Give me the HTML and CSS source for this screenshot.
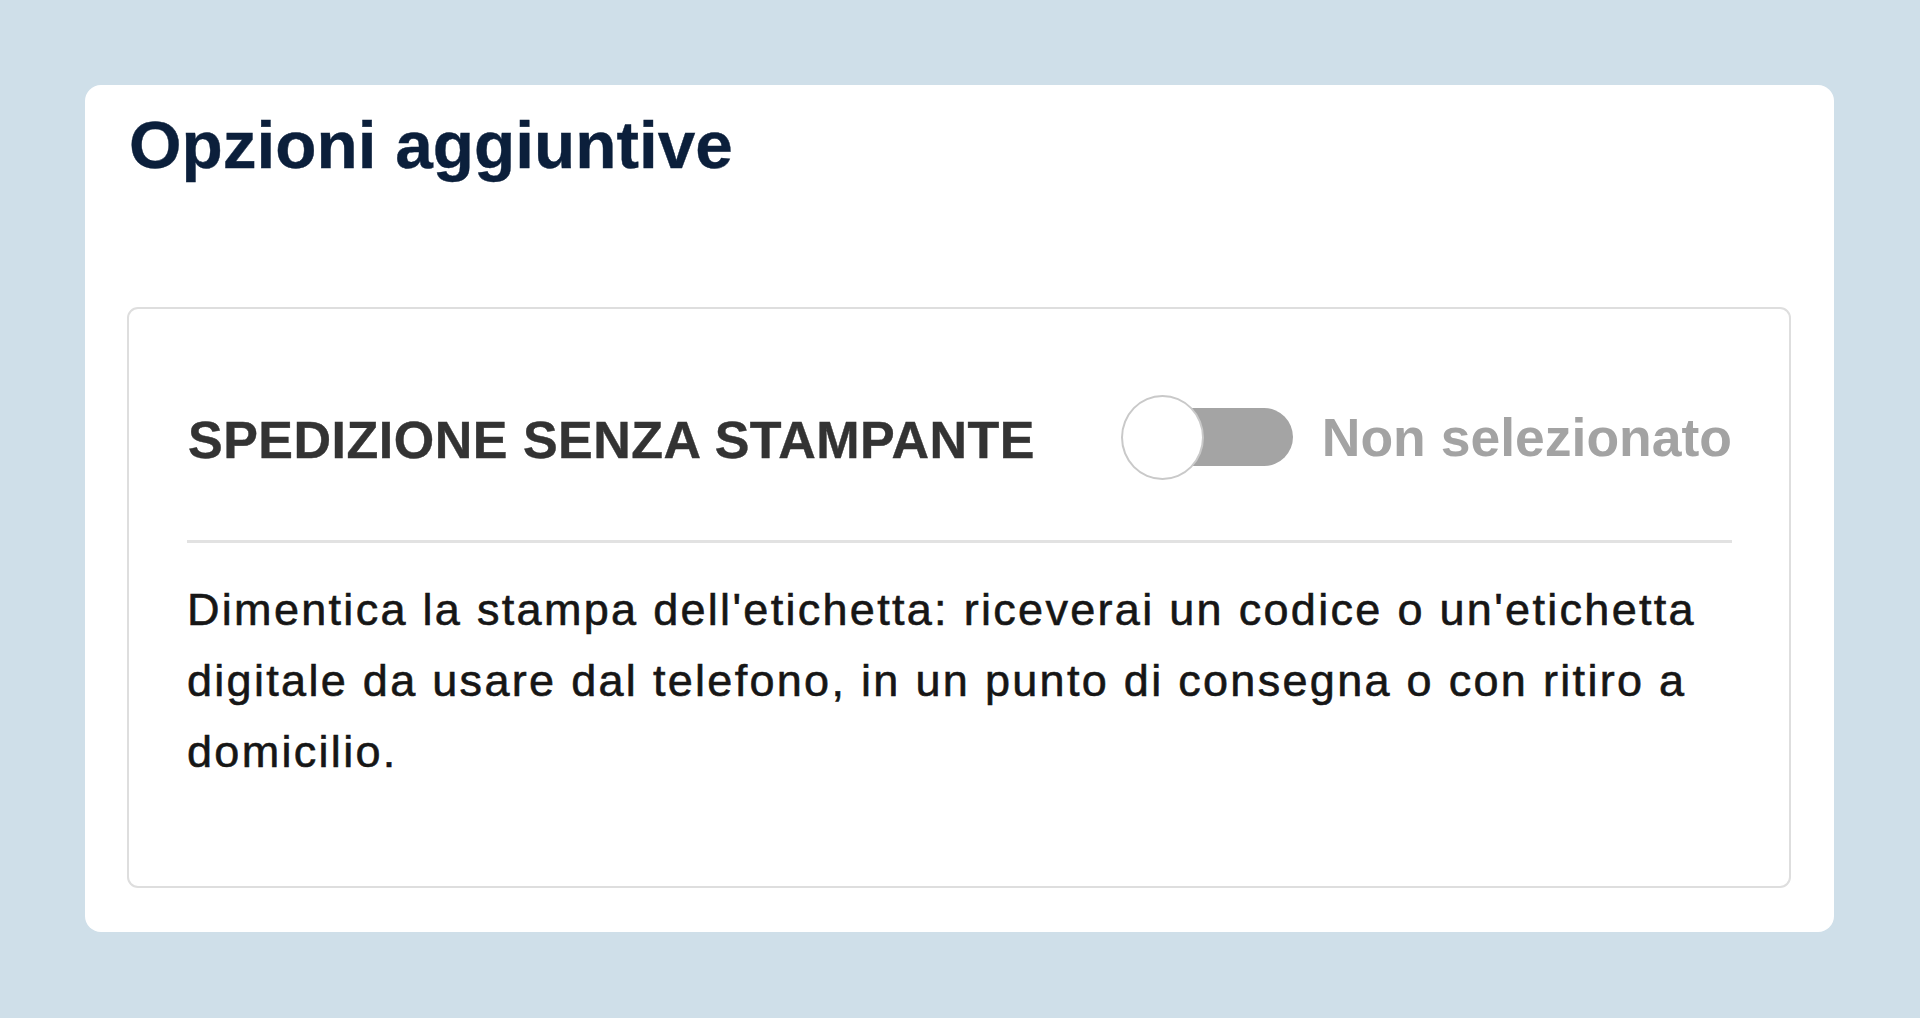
FILE: index.html
```html
<!DOCTYPE html>
<html lang="it">
<head>
<meta charset="utf-8">
<title>Opzioni aggiuntive</title>
<link rel="stylesheet" href="styles.css">
</head>
<body>
<section class="card">
  <h1 class="title">Opzioni aggiuntive</h1>
  <div class="option">
    <div class="option-row">
      <span class="option-label">SPEDIZIONE SENZA STAMPANTE</span>
      <div class="toggle-group">
        <span class="switch" role="switch" aria-checked="false">
          <span class="track"></span>
          <span class="knob"></span>
        </span>
        <span class="status">Non selezionato</span>
      </div>
    </div>
    <div class="divider"></div>
    <p class="desc">Dimentica la stampa dell'etichetta: riceverai un codice o un'etichetta digitale da usare dal telefono, in un punto di consegna o con ritiro a domicilio.</p>
  </div>
</section>
</body>
</html>
```

FILE: styles.css
```css
html, body {
  margin: 0;
  padding: 0;
}
body {
  background: #cfdfe9;
  font-family: "Liberation Sans", Arial, Helvetica, sans-serif;
  padding: 85px 86px 86px 85px;
  min-height: 1018px;
  box-sizing: border-box;
}
.card {
  background: #ffffff;
  border-radius: 16px;
  width: 1749px;
  height: 847px;
  box-sizing: border-box;
  padding: 22px 43px 0 42px;
}
.title {
  margin: 0 0 0 2px;
  font-size: 67.5px;
  line-height: 76px;
  font-weight: 700;
  color: #0b1f3b;
  -webkit-text-stroke: 0.4px #0b1f3b;
}
.option {
  margin-top: 124px;
  border: 2px solid #dedede;
  border-radius: 11px;
  padding: 86px 57px 0 58px;
  height: 581px;
  box-sizing: border-box;
}
.option-row {
  display: flex;
  align-items: center;
  justify-content: space-between;
  height: 85px;
}
.option-label {
  font-size: 52px;
  font-weight: 700;
  letter-spacing: 0.5px;
  color: #333333;
  line-height: 60px;
  margin-left: 1px;
  margin-top: 4px;
  -webkit-text-stroke: 0.4px #333333;
}
.toggle-group {
  display: flex;
  align-items: center;
  gap: 29px;
}
.switch {
  position: relative;
  display: block;
  width: 172px;
  height: 85px;
}
.track {
  position: absolute;
  left: 20px;
  right: 0;
  top: 13px;
  height: 58px;
  border-radius: 29px;
  background: #a4a4a4;
}
.knob {
  position: absolute;
  left: 0;
  top: 0;
  width: 79px;
  height: 81px;
  border: 2px solid #c9c9c9;
  border-radius: 50%;
  background: #ffffff;
}
.status {
  font-size: 53.5px;
  font-weight: 700;
  color: #a3a3a3;
  line-height: 60px;
}
.divider {
  margin-top: 60px;
  height: 3px;
  background: #e2e2e2;
}
.desc {
  margin: 31px 0 0 0;
  font-size: 45px;
  line-height: 71px;
  letter-spacing: 2.3px;
  color: #161616;
  -webkit-text-stroke: 0.6px #161616;
}
```
